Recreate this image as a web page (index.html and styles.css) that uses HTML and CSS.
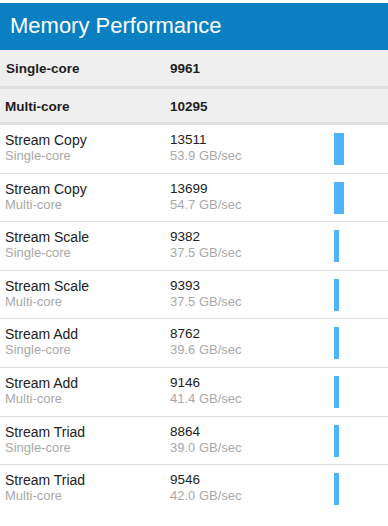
FILE: index.html
```html
<!DOCTYPE html>
<html>
<head>
<meta charset="utf-8">
<link rel="stylesheet" href="styles.css">
</head>
<body>
<div class="panel">
  <div class="header">Memory Performance</div>
  <div class="summary summary-first">
    <span class="s-label">Single-core</span>
    <span class="s-value">9961</span>
  </div>
  <div class="summary summary-second">
    <span class="s-label">Multi-core</span>
    <span class="s-value">10295</span>
  </div>
  <div class="rows">
    <div class="row">
      <div class="cell"><div class="main label">Stream Copy</div><div class="sub">Single-core</div></div>
      <div class="cell"><div class="main">13511</div><div class="sub">53.9 GB/sec</div></div>
      <div class="barcell"><div class="bar" style="width:10px"></div></div>
    </div>
    <div class="row">
      <div class="cell"><div class="main label">Stream Copy</div><div class="sub">Multi-core</div></div>
      <div class="cell"><div class="main">13699</div><div class="sub">54.7 GB/sec</div></div>
      <div class="barcell"><div class="bar" style="width:10px"></div></div>
    </div>
    <div class="row">
      <div class="cell"><div class="main label">Stream Scale</div><div class="sub">Single-core</div></div>
      <div class="cell"><div class="main">9382</div><div class="sub">37.5 GB/sec</div></div>
      <div class="barcell"><div class="bar" style="width:5px"></div></div>
    </div>
    <div class="row">
      <div class="cell"><div class="main label">Stream Scale</div><div class="sub">Multi-core</div></div>
      <div class="cell"><div class="main">9393</div><div class="sub">37.5 GB/sec</div></div>
      <div class="barcell"><div class="bar" style="width:5px"></div></div>
    </div>
    <div class="row">
      <div class="cell"><div class="main label">Stream Add</div><div class="sub">Single-core</div></div>
      <div class="cell"><div class="main">8762</div><div class="sub">39.6 GB/sec</div></div>
      <div class="barcell"><div class="bar" style="width:5px"></div></div>
    </div>
    <div class="row">
      <div class="cell"><div class="main label">Stream Add</div><div class="sub">Multi-core</div></div>
      <div class="cell"><div class="main">9146</div><div class="sub">41.4 GB/sec</div></div>
      <div class="barcell"><div class="bar" style="width:5px"></div></div>
    </div>
    <div class="row">
      <div class="cell"><div class="main label">Stream Triad</div><div class="sub">Single-core</div></div>
      <div class="cell"><div class="main">8864</div><div class="sub">39.0 GB/sec</div></div>
      <div class="barcell"><div class="bar" style="width:5px"></div></div>
    </div>
    <div class="row row-last">
      <div class="cell"><div class="main label">Stream Triad</div><div class="sub">Multi-core</div></div>
      <div class="cell"><div class="main">9546</div><div class="sub">42.0 GB/sec</div></div>
      <div class="barcell"><div class="bar" style="width:5px"></div></div>
    </div>
  </div>
</div>
</body>
</html>
```
FILE: styles.css
```css
html, body {
  margin: 0;
  padding: 0;
  background: #fff;
}
body {
  font-family: "Liberation Sans", Arial, sans-serif;
  font-size: 13px;
  color: #222;
}
.panel {
  padding-top: 3px;
  width: 388px;
}
.header {
  height: 47px;
  box-sizing: border-box;
  background: #0a7fc1;
  color: #fff;
  font-size: 22px;
  line-height: 45px;
  padding-left: 10px;
}
.summary {
  display: grid;
  grid-template-columns: 164px 1fr;
  padding-left: 6px;
  background: #efefef;
  font-weight: bold;
  font-size: 13.5px;
  color: #1e1e1e;
  box-sizing: border-box;
  align-items: center;
}
.summary-first {
  height: 39px;
  border-bottom: 3px solid #e0e0e4;
  padding-top: 1px;
}
.summary-second {
  height: 36px;
  border-bottom: 3px solid #e0e0e4;
  padding-left: 5px;
  grid-template-columns: 165px 1fr;
  padding-top: 1px;
}
.row {
  display: grid;
  grid-template-columns: 165px 164px 1fr;
  padding-left: 5px;
  height: 48.6px;
  box-sizing: border-box;
  border-bottom: 1px solid #dedede;
}
.row-last {
  border-bottom: none;
}
.cell {
  padding-top: 7px;
  line-height: 16px;
}
.main {
  color: #222;
  font-size: 13.5px;
}
.label {
  font-size: 14px;
}
.sub {
  color: #a9a9a9;
  font-size: 13px;
}
.barcell {
  padding-top: 8px;
}
.bar {
  height: 32px;
  background: #50b4fb;
}
```
